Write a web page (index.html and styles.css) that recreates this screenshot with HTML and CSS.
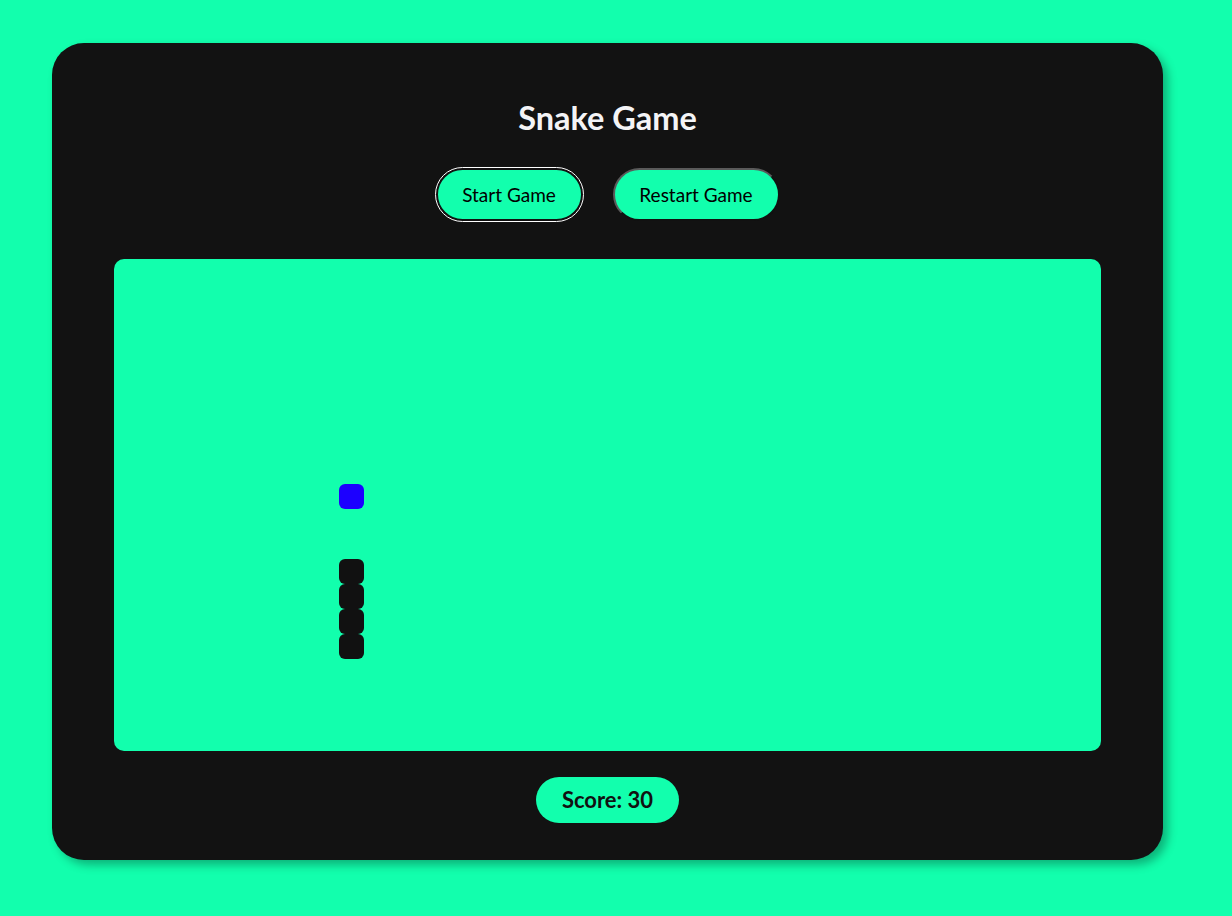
FILE: index.html
```html
<!DOCTYPE html>
<html lang="en">
<head>
<meta charset="utf-8">
<title>Snake Game</title>
<link rel="stylesheet" href="styles.css">
</head>
<body>
<main class="card">
  <h1 class="title">Snake Game</h1>
  <div class="controls">
    <button class="btn btn-start">Start Game</button>
    <button class="btn btn-restart">Restart Game</button>
  </div>
  <div class="board">
    <div class="cell food" style="left:225px;top:225px"></div>
    <div class="cell snake" style="left:225px;top:300px"></div>
    <div class="cell snake" style="left:225px;top:325px"></div>
    <div class="cell snake" style="left:225px;top:350px"></div>
    <div class="cell snake" style="left:225px;top:375px"></div>
  </div>
  <div class="score">Score: 30</div>
</main>
</body>
</html>
```
FILE: styles.css
```css
* { box-sizing: border-box; }
html, body { height: 100%; }
body {
  margin: 0;
  padding: 43px 0 0 52px;
  background: #12ffad;
  font-family: "Lato", "Open Sans", sans-serif;
}
.card {
  width: 1111px;
  height: 817px;
  background: #121212;
  border-radius: 32px;
  box-shadow: 5px 5px 10px rgba(0,0,0,0.3);
  padding: 56px 62px 37px;
  display: flex;
  flex-direction: column;
  align-items: center;
}
.title {
  margin: 0;
  height: 40px;
  line-height: 38px;
  font-size: 32.5px;
  font-weight: 700;
  color: #f4f4f6;
}
.controls {
  margin-top: 29px;
  display: flex;
  gap: 30px;
  height: 53px;
}
.btn {
  height: 53px;
  border-radius: 27px;
  background: #12ffad;
  color: #000;
  font-family: inherit;
  font-size: 19px;
  padding: 0;
  white-space: nowrap;
  cursor: pointer;
}
.btn-start {
  width: 147px;
  border: 2px solid #111;
  outline: 1px solid #fff;
}
.btn-restart {
  width: 167px;
  border: 2px solid;
  border-color: #5a5a5a #111 #111 #5a5a5a;
}
.board {
  position: relative;
  margin-top: 38px;
  width: 987px;
  height: 492px;
  background: #12ffad;
  border-radius: 10px;
}
.cell {
  position: absolute;
  width: 25px;
  height: 25px;
  border-radius: 6px;
}
.food { background: #1c00ff; }
.snake { background: #111; }
.score {
  margin-top: 26px;
  height: 46px;
  line-height: 46px;
  padding: 0 26px;
  border-radius: 23px;
  background: #12ffad;
  color: #111;
  font-size: 22px;
  font-weight: 700;
}
```
